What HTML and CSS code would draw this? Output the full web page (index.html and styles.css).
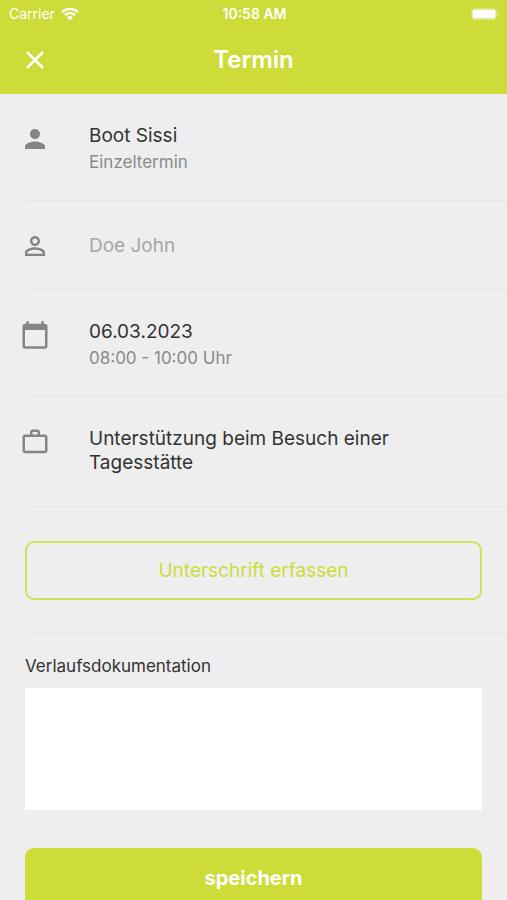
FILE: index.html
```html
<!DOCTYPE html>
<html lang="de">
<head>
    <meta charset="UTF-8">
    <meta name="viewport" content="width=device-width, initial-scale=1">
    <title>Termin</title>
    <link rel="stylesheet" href="styles.css">
</head>
<body>
    <header class="header">
        <div class="status-bar">
            <div class="carrier">
                <span>Carrier</span>
                <svg class="wifi" viewBox="0 0 18 14" aria-hidden="true">
                    <path d="M1 5.2a11.4 11.4 0 0 1 16 0M3.9 8.2a7.3 7.3 0 0 1 10.2 0" fill="none" stroke="currentColor" stroke-width="2.4"/>
                    <path d="M9 13.6l-3-3.2a4.3 4.3 0 0 1 6 0z" fill="currentColor"/>
                </svg>
            </div>
            <div class="time">10:58 AM</div>
            <svg class="battery" viewBox="0 0 30 14" aria-hidden="true">
                <rect x="1.5" y="1.5" width="25" height="11" rx="3" fill="none" stroke="currentColor" opacity=".3"/>
                <rect x="2.500" y="2.500" width="23" height="9" rx="1.5" fill="currentColor"/>
                <path d="M28 5v4q1.500-.5 1.500-2T28 5z" fill="currentColor" opacity=".3"/>
            </svg>
        </div>
        <div class="title-bar">
            <button class="close" type="button" aria-label="Schließen">
                <svg viewBox="0 0 18 18" aria-hidden="true">
                    <path d="M1 1l16 16M17 1L1 17" stroke="currentColor" stroke-width="2.600"/>
                </svg>
            </button>
            <h1>Termin</h1>
        </div>
    </header>

    <main>
        <div class="rows">
            <div class="row">
                <svg class="icon" viewBox="0 0 24 24" aria-hidden="true"><path d="M12 12c2.210 0 4-1.790 4-4s-1.790-4-4-4-4 1.790-4 4 1.790 4 4 4zm0 2c-2.670 0-8 1.340-8 4v2h16v-2c0-2.660-5.330-4-8-4z"/></svg>
                <div class="text">
                    <div class="main-text">Boot Sissi</div>
                    <div class="sub-text">Einzeltermin</div>
                </div>
            </div>
            <div class="row row-single">
                <svg class="icon" viewBox="0 0 24 24" aria-hidden="true"><path d="M12 5.900c1.160 0 2.100.94 2.100 2.100s-.94 2.100-2.100 2.100S9.900 9.160 9.900 8s.94-2.100 2.100-2.100m0 9c2.970 0 6.100 1.460 6.100 2.100v1.100H5.900V17c0-.64 3.130-2.100 6.100-2.100M12 4C9.790 4 8 5.790 8 8s1.790 4 4 4 4-1.790 4-4-1.790-4-4-4zm0 9c-2.670 0-8 1.340-8 4v3h16v-3c0-2.660-5.330-4-8-4z"/></svg>
                <div class="text">
                    <div class="main-text muted">Doe John</div>
                </div>
            </div>
            <div class="row">
                <svg class="icon" viewBox="0 0 24 24" aria-hidden="true"><path d="M20 3h-1V1h-2v2H7V1H5v2H4c-1.100 0-2 .9-2 2v16c0 1.100.9 2 2 2h16c1.100 0 2-.9 2-2V5c0-1.100-.9-2-2-2zm0 18H4V8h16v13z"/></svg>
                <div class="text">
                    <div class="main-text">06.03.2023</div>
                    <div class="sub-text">08:00 - 10:00 Uhr</div>
                </div>
            </div>
            <div class="row row-long">
                <svg class="icon" viewBox="0 0 24 24" aria-hidden="true"><path d="M14 6V4h-4v2h4zM4 8v11h16V8H4zm16-2c1.110 0 2 .89 2 2v11c0 1.110-.89 2-2 2H4c-1.110 0-2-.89-2-2V8c0-1.110.89-2 2-2h4V4c0-1.110.89-2 2-2h4c1.110 0 2 .89 2 2v2h4z"/></svg>
                <div class="text">
                    <div class="main-text">Unterstützung beim Besuch einer Tagesstätte</div>
                </div>
            </div>
            <div class="row row-button">
                <button class="btn btn-outline" type="button">Unterschrift erfassen</button>
            </div>
        </div>

        <form class="doc-form">
            <label for="doc">Verlaufsdokumentation</label>
            <textarea id="doc" name="doc"></textarea>
            <button class="btn btn-save" type="button">speichern</button>
        </form>
    </main>
</body>
</html>
```

FILE: styles.css
```css
* {
    box-sizing: border-box;
}

body {
    margin: 0;
    background: #eeeeee;
    color: #333333;
    font-family: Inter, "Liberation Sans", sans-serif;
    font-size: 19px;
    line-height: 24px;
}

.header {
    background: #cddc39;
    color: #ffffff;
}

.status-bar {
    display: grid;
    grid-template-columns: 1fr auto 1fr;
    align-items: center;
    height: 27px;
    padding: 0 7px 0 9px;
    font-size: 14px;
}

.carrier {
    display: flex;
    align-items: center;
    gap: 6px;
}

.wifi {
    width: 18px;
    height: 14px;
}

.time {
    font-weight: 600;
}

.battery {
    justify-self: end;
    width: 30px;
    height: 14px;
}

.title-bar {
    display: grid;
    grid-template-columns: 32px 1fr 32px;
    align-items: center;
    height: 67px;
    padding: 0 19px 2px;
}

.close {
    display: flex;
    justify-content: center;
    padding: 7px;
    border: none;
    background: none;
    color: inherit;
    cursor: pointer;
}

.close svg {
    width: 18px;
    height: 18px;
}

h1 {
    margin: 0;
    font-size: 24px;
    font-weight: 600;
    text-align: center;
}

.rows {
    padding-left: 25px;
}

.row {
    display: flex;
    align-items: flex-start;
    gap: 39px;
    padding: 30px 25px 26px 0;
    border-bottom: 1px solid #e6e6e6;
}

.row-single {
    align-items: center;
    padding-bottom: 28px;
}

.row-long {
    padding-bottom: 31px;
}

.row-button {
    padding-top: 34px;
    padding-bottom: 33px;
}

.icon {
    flex: none;
    width: 30px;
    height: 30px;
    margin-left: -5px;
    fill: #858585;
}

.sub-text {
    margin-top: 2px;
    color: #8a8a8a;
    font-size: 17px;
}

.muted {
    color: #a6a6a6;
}

.btn {
    width: 100%;
    height: 59px;
    border: none;
    border-radius: 9px;
    font-family: inherit;
    font-size: 19px;
    cursor: pointer;
}

.btn-outline {
    border: 2px solid #d3e05a;
    background: none;
    color: #cddc39;
}

.btn-save {
    background: #cddc39;
    color: #ffffff;
    font-size: 20px;
    font-weight: 700;
}

.doc-form {
    display: flex;
    flex-direction: column;
    padding: 20px 25px 0;
}

.doc-form label {
    font-size: 17px;
}

.doc-form textarea {
    height: 122px;
    margin: 10px 0 38px;
    padding: 10px;
    border: none;
    background: #ffffff;
    font: inherit;
    resize: none;
}
```
